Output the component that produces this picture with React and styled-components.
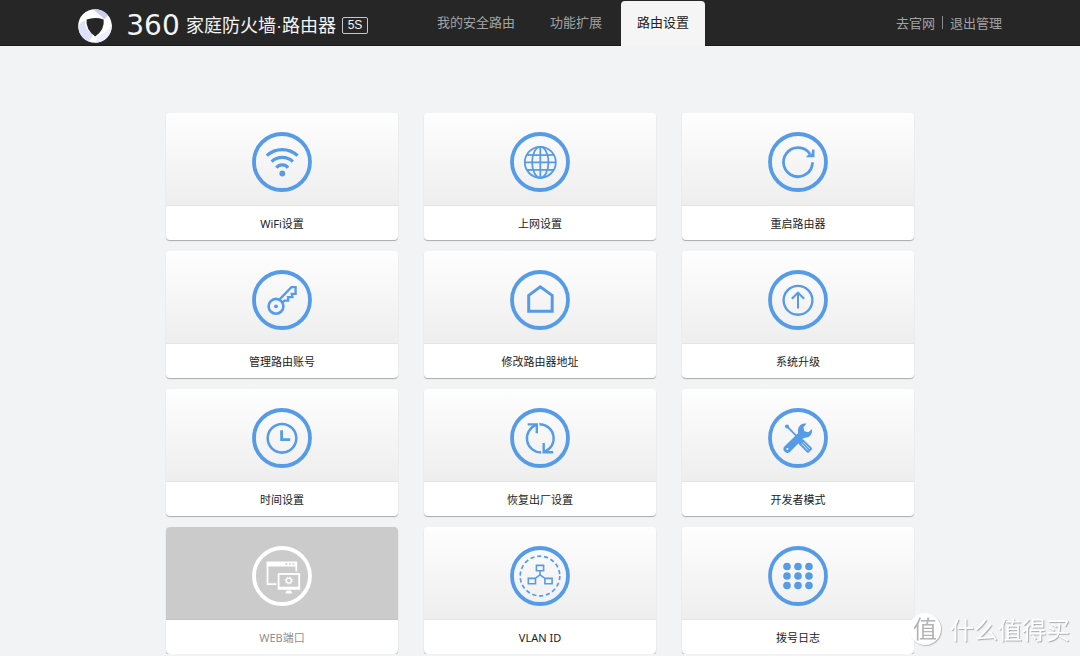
import React from 'react';
import styled, { createGlobalStyle } from 'styled-components'

const GlobalStyle = createGlobalStyle`
  * {
    box-sizing: border-box;
  }
  body {
    margin: 0;
    background: #f2f3f5;
    font-family: "Noto Sans", "Noto Sans CJK SC", sans-serif;
  }
  a {
    color: inherit;
    text-decoration: none;
  }
`

const Header = styled.header`
  background: #262626;
  border-bottom: 1px solid #1a1a1a;
`

const HeaderInner = styled.div`
  display: flex;
  align-items: center;
  max-width: 924px;
  height: 45px;
  margin: 0 auto;
  font-family: "Noto Sans CJK SC", sans-serif;
`

const Brand = styled.a`
  display: flex;
  align-items: center;
  padding-top: 6px;
  color: #f4f4f4;
  white-space: nowrap;
`

const BrandNumber = styled.span`
  width: 66px;
  margin-left: 8px;
  text-align: center;
  font-family: "DejaVu Sans", sans-serif;
  font-size: 28px;
  line-height: 32px;
`

const BrandName = styled.span`
  font-family: "Liberation Sans", "Noto Sans CJK SC", sans-serif;
  font-size: 18px;
  line-height: 32px;
`

const Model = styled.span`
  width: 26px;
  margin-left: 6px;
  border: 1px solid #c8c8c8;
  border-radius: 2px;
  text-align: center;
  font-family: "Liberation Sans", sans-serif;
  font-size: 12px;
  line-height: 15px;
`

const Nav = styled.nav`
  display: flex;
  align-self: flex-end;
  gap: 3px;
  margin-left: 53px;
  margin-bottom: -1px;
`

const NavItem = styled.a`
  padding: 0 16px;
  height: 45px;
  border-radius: 4px 4px 0 0;
  background: ${props => props.$active ? '#f5f5f5' : 'transparent'};
  font-size: 13px;
  line-height: 42px;
  white-space: nowrap;
  && {
    color: ${props => props.$active ? '#222' : '#a3a3a3'};
  }
`

const UserLinks = styled.div`
  display: flex;
  align-items: center;
  margin-left: auto;
  color: #a3a3a3;
  font-size: 13px;
  line-height: 20px;
  white-space: nowrap;
`

const Separator = styled.span`
  width: 1px;
  height: 13px;
  margin: 0 7px;
  background: #8a8a8a;
`

const Grid = styled.main`
  display: grid;
  grid-template-columns: repeat(3, 1fr);
  column-gap: 26px;
  row-gap: 11px;
  max-width: 748px;
  margin: 67px auto 0;
`

const Card = styled.a`
  display: block;
  border-radius: 4px;
  background: #fff;
  box-shadow: 0 1px 1px rgba(0, 0, 0, 0.3);
  overflow: hidden;
  && {
    color: ${props => props.$disabled ? '#8f8f8f' : '#222'};
  }
`

const CardTop = styled.div`
  display: flex;
  justify-content: center;
  height: 93px;
  padding-top: 19px;
  border-bottom: 1px solid ${props => props.$disabled ? '#c3c3c3' : '#e4e4e4'};
  background: ${props => props.$disabled ? '#cbcbcb' : 'linear-gradient(#fefefe, #eee)'};
  color: ${props => props.$disabled ? '#fff' : '#559be8'};
`

const CardLabel = styled.div`
  height: 34px;
  text-align: center;
  font-size: 11px;
  line-height: 36px;
`

const Watermark = styled.div`
  position: fixed;
  right: 10px;
  bottom: 11px;
  display: flex;
  align-items: center;
  gap: 9px;
  pointer-events: none;
  font-family: "Noto Sans CJK SC", sans-serif;
  color: #fff;
  font-size: 24px;
  line-height: 32px;
  text-shadow: 1px 1px 1px #aaa;
`

const WatermarkSeal = styled.span`
  width: 32px;
  height: 32px;
  border-radius: 50%;
  background: #fff;
  box-shadow: 1px 1px 1px #bbb;
  color: #b4b4b4;
  text-align: center;
  text-shadow: none;
  font-size: 24px;
  line-height: 30px;
`

const icons = {
  wifi: (
    <>
      <path d="M14.8 23.6A22.6 22.6 0 0 1 45.6 23.6M19.6 29.6A15.8 15.8 0 0 1 40.9 29.6M24.4 35.8A7.4 7.4 0 0 1 36.1 35.8" strokeWidth="3.2" />
      <circle cx="30.3" cy="41.5" r="2.9" fill="currentColor" stroke="none" />
    </>
  ),
  globe: (
    <g strokeWidth="1.8">
      <circle cx="30.3" cy="30.3" r="15.5" />
      <ellipse cx="30.3" cy="30.3" rx="8.2" ry="15.5" />
      <path d="M30.3 15V46M15 30.3H46M17 22.8Q30.3 23.6 43.6 22.8M17 38Q30.3 37.2 43.6 38" />
    </g>
  ),
  restart: (
    <>
      <path d="M44.5 30.2A14.5 14.5 0 1 1 42 22" strokeWidth="2.8" />
      <path d="M46.5 17.4V25.3H37.8L40.4 22.6L43.6 21.8L44.2 17.4Z" fill="currentColor" stroke="none" />
    </>
  ),
  key: (
    <g strokeWidth="2.6">
      <circle cx="24" cy="36.3" r="7.4" />
      <circle cx="24" cy="36.3" r="1.9" fill="currentColor" stroke="none" />
      <path d="M27.4 29.6L39.4 17.2H43.6V23.8H39.8L40.4 27.2H36L36.2 30.6H32.4L29.8 33" strokeWidth="2.3" />
    </g>
  ),
  home: <path d="M18.7 25.4L30.3 16.9L42.2 25.4V41.2H18.7Z" strokeWidth="3" />,
  upgrade: (
    <>
      <circle cx="30" cy="30.3" r="14.4" strokeWidth="2.4" />
      <path d="M30 38.6V23M23.8 28.8L30 22.7L36.2 28.8" strokeWidth="2" />
    </>
  ),
  clock: (
    <>
      <circle cx="30" cy="30.3" r="14.3" strokeWidth="2.6" />
      <path d="M29.6 22.3V31.6H38.2" strokeWidth="2.8" />
    </>
  ),
  reset: (
    <g strokeWidth="2.4">
      <path d="M26.4 16.9A14.2 14.2 0 0 0 31.2 44.5" />
      <path d="M29.4 16.2A14.2 14.2 0 0 1 34.2 43.8" />
      <path d="M17.6 16.4H26.8V25.2M33.7 35V44.3H43.2" />
    </g>
  ),
  tools: (
    <>
      <path d="M19 18.4L32 31.6" strokeWidth="1.8" />
      <circle cx="19" cy="18.4" r="2" fill="currentColor" stroke="none" />
      <g transform="rotate(45 37.4 38)">
        <rect x="30.4" y="34.8" width="14" height="6.6" rx="1.2" fill="currentColor" stroke="none" />
        <path d="M33 37H42.5M33 39.2H42.5" stroke="#f5f5f5" strokeWidth="0.8" />
      </g>
      <path d="M31.8 23.6L37 28.8L22.4 43.6A3.8 3.8 0 0 1 16.6 38.2Z" fill="currentColor" stroke="none" />
      <path d="M38.6 15.6A7.2 7.2 0 1 0 44 21L40.4 24.2L36.4 23.2L35.4 19.2Z" fill="currentColor" stroke="none" />
      <circle cx="19.4" cy="41" r="1.1" fill="#f5f5f5" stroke="none" />
    </>
  ),
  web: (
    <>
      <path d="M24.4 38.2H15.5V17H44.3V25.4" strokeWidth="1.7" />
      <path d="M14.7 15.6H45.1V20.4H14.7Z" fill="currentColor" stroke="none" />
      <path d="M33.4 18H35.2M37 18H38.8M40.6 18H42.4" stroke="#cbcbcb" strokeWidth="1.6" />
      <rect x="26.6" y="28" width="20.6" height="14.6" strokeWidth="1.8" />
      <path d="M26 40.8H48V43.6H26ZM34.8 44.4H38.8L40.4 47.6H33.2Z" fill="currentColor" stroke="none" />
      <circle cx="36.8" cy="34.6" r="2.5" strokeWidth="1.3" />
      <circle cx="36.8" cy="34.6" r="3.5" strokeWidth="1" strokeDasharray="1.4 1.35" />
    </>
  ),
  vlan: (
    <>
      <circle cx="30" cy="30" r="19.8" strokeWidth="1.7" strokeDasharray="4.2 2.71" />
      <path d="M26.4 19.4H33.6V24.8H26.4ZM18.3 32.4H25.5V37.8H18.3ZM34.9 32.4H42.1V37.8H34.9ZM30 25V28.8L25.2 32.4M30 28.8L35 32.4" strokeWidth="1.6" />
    </>
  ),
  dots: [20.5, 30, 39.5].map(y => [19, 30, 41].map(x => (
    <circle key={x + '-' + y} cx={x} cy={y} r="3.8" fill="currentColor" stroke="none" />
  ))),
}

const RoundIcon = ({ name }) => (
  <svg width="60" height="60" viewBox="0 0 60 60" fill="none" stroke="currentColor" aria-hidden="true">
    <circle cx="30" cy="30" r="28" strokeWidth="3.8" />
    {icons[name]}
  </svg>
)

const Logo = () => (
  <svg width="34" height="34" viewBox="0 0 34 34" aria-hidden="true">
    <circle cx="17" cy="17" r="16.8" fill="#fff" />
    <path d="M15 .4A16.8 16.8 0 0 1 30 6.5L26.2 10.2Q25 8 15 .4Z" fill="#c9cdf2" />
    <path d="M.3 18A16.8 16.8 0 0 0 11 32.7L15.6 25Q5 20 7.6 11Q2 13 .3 18Z" fill="#dfe1f8" />
    <path d="M33.6 15Q31 23 20 26.5L17 33.8A16.8 16.8 0 0 0 33.6 15Z" fill="#eeeffc" />
    <path d="M8.6 10.6Q17 7.6 25.6 10.4Q27 20.6 17.2 27.4Q7.4 20.6 8.6 10.6Z" fill="#262626" />
  </svg>
)

const cards = [
  { icon: 'wifi', label: 'WiFi设置' },
  { icon: 'globe', label: '上网设置' },
  { icon: 'restart', label: '重启路由器' },
  { icon: 'key', label: '管理路由账号' },
  { icon: 'home', label: '修改路由器地址' },
  { icon: 'upgrade', label: '系统升级' },
  { icon: 'clock', label: '时间设置' },
  { icon: 'reset', label: '恢复出厂设置' },
  { icon: 'tools', label: '开发者模式' },
  { icon: 'web', label: 'WEB端口', disabled: true },
  { icon: 'vlan', label: 'VLAN ID' },
  { icon: 'dots', label: '拨号日志' },
]

export default function App() {
  return (
    <>
      <GlobalStyle />
      <Header>
        <HeaderInner>
          <Brand href="#home">
            <Logo />
            <BrandNumber>360</BrandNumber>
            <BrandName>家庭防火墙·路由器</BrandName>
            <Model>5S</Model>
          </Brand>
          <Nav>
            <NavItem href="#router">我的安全路由</NavItem>
            <NavItem href="#extensions">功能扩展</NavItem>
            <NavItem href="#settings" $active aria-current="page">路由设置</NavItem>
          </Nav>
          <UserLinks>
            <a href="#site">去官网</a>
            <Separator />
            <a href="#logout">退出管理</a>
          </UserLinks>
        </HeaderInner>
      </Header>
      <Grid>
        {cards.map(card => (
          <Card key={card.icon} href={'#' + card.icon} $disabled={card.disabled} aria-disabled={card.disabled}>
            <CardTop $disabled={card.disabled}>
              <RoundIcon name={card.icon} />
            </CardTop>
            <CardLabel>{card.label}</CardLabel>
          </Card>
        ))}
      </Grid>
      <Watermark>
        <WatermarkSeal>值</WatermarkSeal>
        <span>什么值得买</span>
      </Watermark>
    </>
  )
}
